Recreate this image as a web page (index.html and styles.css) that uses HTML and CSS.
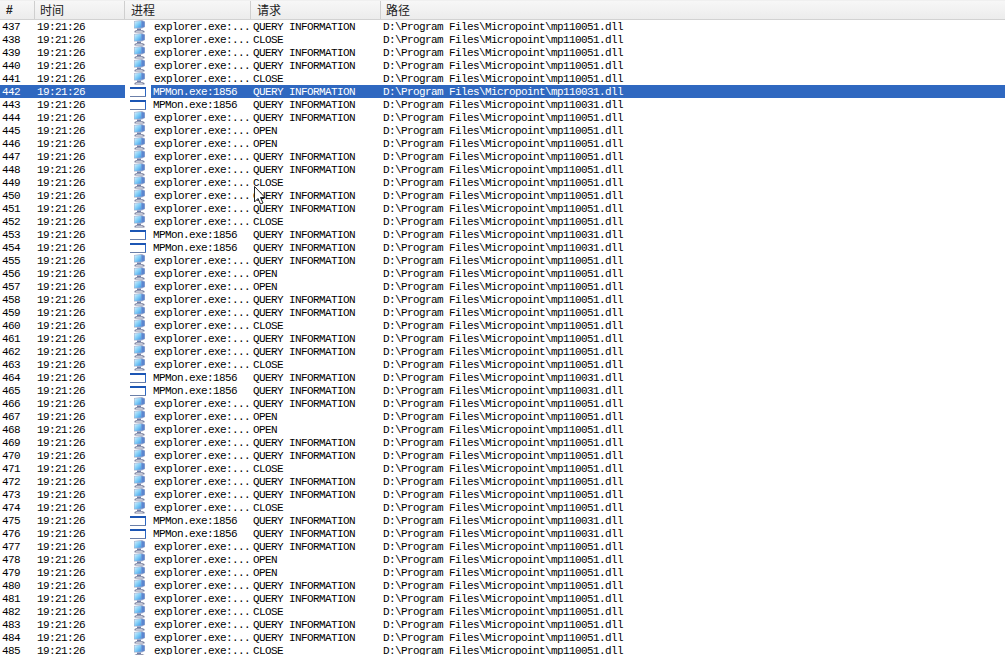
FILE: index.html
```html
<!DOCTYPE html>
<html lang="zh">
<head>
<meta charset="utf-8">
<title>Process log</title>
<link rel="stylesheet" href="styles.css">
</head>
<body>
<svg class="defs" width="0" height="0" aria-hidden="true">
  <defs>
    <linearGradient id="scr" x1="0" y1="0" x2="1" y2="1">
      <stop offset="0" stop-color="#d8f1fd"/>
      <stop offset=".5" stop-color="#7fcdf7"/>
      <stop offset="1" stop-color="#3a92e8"/>
    </linearGradient>
  </defs>
  <symbol id="pc" viewBox="0 0 26 13">
    <path d="M9 1 17 0 20 1.5V7L17 8.5 9 8.5Z" fill="#a5aecb"/>
    <path d="M9.5 1.6 16.5 1V7.6L9.5 8Z" fill="url(#scr)"/>
    <path d="M16.5 1 19.5 1.8V6.8L16.5 7.8Z" fill="#5a86d0"/>
    <path d="M12 8.5H16V10H12Z" fill="#6f7ea8"/>
    <path d="M9.5 11 11.5 10H17L19.5 11V12.5H9.5Z" fill="#7c829e"/>
    <path d="M11.5 10.8H17L18 11.8H10.5Z" fill="#dde0ea"/>
  </symbol>
  <symbol id="win" viewBox="0 0 26 13">
    <path d="M5 2H21V4H5Z" fill="#1c56b4"/>
    <path d="M20 4H21V11H20Z" fill="#2b67c4"/>
    <path d="M5 11H21V12H5Z" fill="#6b7fa8"/>
  </symbol>
</svg>
<div class="head">
  <div class="hc c-n hash">#</div>
  <div class="hc c-t">时间</div>
  <div class="hc c-p">进程</div>
  <div class="hc c-r">请求</div>
  <div class="hc c-f">路径</div>
</div>
<div class="rows">
<div class="row"><span class="c-n">437</span><span class="c-t">19:21:26</span><svg class="ico"><use href="#pc"/></svg><span class="pn">explorer.exe:...</span><span class="c-r">QUERY INFORMATION</span><span class="c-f">D:\Program Files\Micropoint\mp110051.dll</span></div>
<div class="row"><span class="c-n">438</span><span class="c-t">19:21:26</span><svg class="ico"><use href="#pc"/></svg><span class="pn">explorer.exe:...</span><span class="c-r">CLOSE</span><span class="c-f">D:\Program Files\Micropoint\mp110051.dll</span></div>
<div class="row"><span class="c-n">439</span><span class="c-t">19:21:26</span><svg class="ico"><use href="#pc"/></svg><span class="pn">explorer.exe:...</span><span class="c-r">QUERY INFORMATION</span><span class="c-f">D:\Program Files\Micropoint\mp110051.dll</span></div>
<div class="row"><span class="c-n">440</span><span class="c-t">19:21:26</span><svg class="ico"><use href="#pc"/></svg><span class="pn">explorer.exe:...</span><span class="c-r">QUERY INFORMATION</span><span class="c-f">D:\Program Files\Micropoint\mp110051.dll</span></div>
<div class="row"><span class="c-n">441</span><span class="c-t">19:21:26</span><svg class="ico"><use href="#pc"/></svg><span class="pn">explorer.exe:...</span><span class="c-r">CLOSE</span><span class="c-f">D:\Program Files\Micropoint\mp110051.dll</span></div>
<div class="row sel"><span class="c-n">442</span><span class="c-t">19:21:26</span><svg class="ico"><use href="#win"/></svg><span class="pn mp">MPMon.exe:1856</span><span class="c-r">QUERY INFORMATION</span><span class="c-f">D:\Program Files\Micropoint\mp110031.dll</span></div>
<div class="row"><span class="c-n">443</span><span class="c-t">19:21:26</span><svg class="ico"><use href="#win"/></svg><span class="pn mp">MPMon.exe:1856</span><span class="c-r">QUERY INFORMATION</span><span class="c-f">D:\Program Files\Micropoint\mp110031.dll</span></div>
<div class="row"><span class="c-n">444</span><span class="c-t">19:21:26</span><svg class="ico"><use href="#pc"/></svg><span class="pn">explorer.exe:...</span><span class="c-r">QUERY INFORMATION</span><span class="c-f">D:\Program Files\Micropoint\mp110051.dll</span></div>
<div class="row"><span class="c-n">445</span><span class="c-t">19:21:26</span><svg class="ico"><use href="#pc"/></svg><span class="pn">explorer.exe:...</span><span class="c-r">OPEN</span><span class="c-f">D:\Program Files\Micropoint\mp110051.dll</span></div>
<div class="row"><span class="c-n">446</span><span class="c-t">19:21:26</span><svg class="ico"><use href="#pc"/></svg><span class="pn">explorer.exe:...</span><span class="c-r">OPEN</span><span class="c-f">D:\Program Files\Micropoint\mp110051.dll</span></div>
<div class="row"><span class="c-n">447</span><span class="c-t">19:21:26</span><svg class="ico"><use href="#pc"/></svg><span class="pn">explorer.exe:...</span><span class="c-r">QUERY INFORMATION</span><span class="c-f">D:\Program Files\Micropoint\mp110051.dll</span></div>
<div class="row"><span class="c-n">448</span><span class="c-t">19:21:26</span><svg class="ico"><use href="#pc"/></svg><span class="pn">explorer.exe:...</span><span class="c-r">QUERY INFORMATION</span><span class="c-f">D:\Program Files\Micropoint\mp110051.dll</span></div>
<div class="row"><span class="c-n">449</span><span class="c-t">19:21:26</span><svg class="ico"><use href="#pc"/></svg><span class="pn">explorer.exe:...</span><span class="c-r">CLOSE</span><span class="c-f">D:\Program Files\Micropoint\mp110051.dll</span></div>
<div class="row"><span class="c-n">450</span><span class="c-t">19:21:26</span><svg class="ico"><use href="#pc"/></svg><span class="pn">explorer.exe:...</span><span class="c-r">QUERY INFORMATION</span><span class="c-f">D:\Program Files\Micropoint\mp110051.dll</span></div>
<div class="row"><span class="c-n">451</span><span class="c-t">19:21:26</span><svg class="ico"><use href="#pc"/></svg><span class="pn">explorer.exe:...</span><span class="c-r">QUERY INFORMATION</span><span class="c-f">D:\Program Files\Micropoint\mp110051.dll</span></div>
<div class="row"><span class="c-n">452</span><span class="c-t">19:21:26</span><svg class="ico"><use href="#pc"/></svg><span class="pn">explorer.exe:...</span><span class="c-r">CLOSE</span><span class="c-f">D:\Program Files\Micropoint\mp110051.dll</span></div>
<div class="row"><span class="c-n">453</span><span class="c-t">19:21:26</span><svg class="ico"><use href="#win"/></svg><span class="pn mp">MPMon.exe:1856</span><span class="c-r">QUERY INFORMATION</span><span class="c-f">D:\Program Files\Micropoint\mp110031.dll</span></div>
<div class="row"><span class="c-n">454</span><span class="c-t">19:21:26</span><svg class="ico"><use href="#win"/></svg><span class="pn mp">MPMon.exe:1856</span><span class="c-r">QUERY INFORMATION</span><span class="c-f">D:\Program Files\Micropoint\mp110031.dll</span></div>
<div class="row"><span class="c-n">455</span><span class="c-t">19:21:26</span><svg class="ico"><use href="#pc"/></svg><span class="pn">explorer.exe:...</span><span class="c-r">QUERY INFORMATION</span><span class="c-f">D:\Program Files\Micropoint\mp110051.dll</span></div>
<div class="row"><span class="c-n">456</span><span class="c-t">19:21:26</span><svg class="ico"><use href="#pc"/></svg><span class="pn">explorer.exe:...</span><span class="c-r">OPEN</span><span class="c-f">D:\Program Files\Micropoint\mp110051.dll</span></div>
<div class="row"><span class="c-n">457</span><span class="c-t">19:21:26</span><svg class="ico"><use href="#pc"/></svg><span class="pn">explorer.exe:...</span><span class="c-r">OPEN</span><span class="c-f">D:\Program Files\Micropoint\mp110051.dll</span></div>
<div class="row"><span class="c-n">458</span><span class="c-t">19:21:26</span><svg class="ico"><use href="#pc"/></svg><span class="pn">explorer.exe:...</span><span class="c-r">QUERY INFORMATION</span><span class="c-f">D:\Program Files\Micropoint\mp110051.dll</span></div>
<div class="row"><span class="c-n">459</span><span class="c-t">19:21:26</span><svg class="ico"><use href="#pc"/></svg><span class="pn">explorer.exe:...</span><span class="c-r">QUERY INFORMATION</span><span class="c-f">D:\Program Files\Micropoint\mp110051.dll</span></div>
<div class="row"><span class="c-n">460</span><span class="c-t">19:21:26</span><svg class="ico"><use href="#pc"/></svg><span class="pn">explorer.exe:...</span><span class="c-r">CLOSE</span><span class="c-f">D:\Program Files\Micropoint\mp110051.dll</span></div>
<div class="row"><span class="c-n">461</span><span class="c-t">19:21:26</span><svg class="ico"><use href="#pc"/></svg><span class="pn">explorer.exe:...</span><span class="c-r">QUERY INFORMATION</span><span class="c-f">D:\Program Files\Micropoint\mp110051.dll</span></div>
<div class="row"><span class="c-n">462</span><span class="c-t">19:21:26</span><svg class="ico"><use href="#pc"/></svg><span class="pn">explorer.exe:...</span><span class="c-r">QUERY INFORMATION</span><span class="c-f">D:\Program Files\Micropoint\mp110051.dll</span></div>
<div class="row"><span class="c-n">463</span><span class="c-t">19:21:26</span><svg class="ico"><use href="#pc"/></svg><span class="pn">explorer.exe:...</span><span class="c-r">CLOSE</span><span class="c-f">D:\Program Files\Micropoint\mp110051.dll</span></div>
<div class="row"><span class="c-n">464</span><span class="c-t">19:21:26</span><svg class="ico"><use href="#win"/></svg><span class="pn mp">MPMon.exe:1856</span><span class="c-r">QUERY INFORMATION</span><span class="c-f">D:\Program Files\Micropoint\mp110031.dll</span></div>
<div class="row"><span class="c-n">465</span><span class="c-t">19:21:26</span><svg class="ico"><use href="#win"/></svg><span class="pn mp">MPMon.exe:1856</span><span class="c-r">QUERY INFORMATION</span><span class="c-f">D:\Program Files\Micropoint\mp110031.dll</span></div>
<div class="row"><span class="c-n">466</span><span class="c-t">19:21:26</span><svg class="ico"><use href="#pc"/></svg><span class="pn">explorer.exe:...</span><span class="c-r">QUERY INFORMATION</span><span class="c-f">D:\Program Files\Micropoint\mp110051.dll</span></div>
<div class="row"><span class="c-n">467</span><span class="c-t">19:21:26</span><svg class="ico"><use href="#pc"/></svg><span class="pn">explorer.exe:...</span><span class="c-r">OPEN</span><span class="c-f">D:\Program Files\Micropoint\mp110051.dll</span></div>
<div class="row"><span class="c-n">468</span><span class="c-t">19:21:26</span><svg class="ico"><use href="#pc"/></svg><span class="pn">explorer.exe:...</span><span class="c-r">OPEN</span><span class="c-f">D:\Program Files\Micropoint\mp110051.dll</span></div>
<div class="row"><span class="c-n">469</span><span class="c-t">19:21:26</span><svg class="ico"><use href="#pc"/></svg><span class="pn">explorer.exe:...</span><span class="c-r">QUERY INFORMATION</span><span class="c-f">D:\Program Files\Micropoint\mp110051.dll</span></div>
<div class="row"><span class="c-n">470</span><span class="c-t">19:21:26</span><svg class="ico"><use href="#pc"/></svg><span class="pn">explorer.exe:...</span><span class="c-r">QUERY INFORMATION</span><span class="c-f">D:\Program Files\Micropoint\mp110051.dll</span></div>
<div class="row"><span class="c-n">471</span><span class="c-t">19:21:26</span><svg class="ico"><use href="#pc"/></svg><span class="pn">explorer.exe:...</span><span class="c-r">CLOSE</span><span class="c-f">D:\Program Files\Micropoint\mp110051.dll</span></div>
<div class="row"><span class="c-n">472</span><span class="c-t">19:21:26</span><svg class="ico"><use href="#pc"/></svg><span class="pn">explorer.exe:...</span><span class="c-r">QUERY INFORMATION</span><span class="c-f">D:\Program Files\Micropoint\mp110051.dll</span></div>
<div class="row"><span class="c-n">473</span><span class="c-t">19:21:26</span><svg class="ico"><use href="#pc"/></svg><span class="pn">explorer.exe:...</span><span class="c-r">QUERY INFORMATION</span><span class="c-f">D:\Program Files\Micropoint\mp110051.dll</span></div>
<div class="row"><span class="c-n">474</span><span class="c-t">19:21:26</span><svg class="ico"><use href="#pc"/></svg><span class="pn">explorer.exe:...</span><span class="c-r">CLOSE</span><span class="c-f">D:\Program Files\Micropoint\mp110051.dll</span></div>
<div class="row"><span class="c-n">475</span><span class="c-t">19:21:26</span><svg class="ico"><use href="#win"/></svg><span class="pn mp">MPMon.exe:1856</span><span class="c-r">QUERY INFORMATION</span><span class="c-f">D:\Program Files\Micropoint\mp110031.dll</span></div>
<div class="row"><span class="c-n">476</span><span class="c-t">19:21:26</span><svg class="ico"><use href="#win"/></svg><span class="pn mp">MPMon.exe:1856</span><span class="c-r">QUERY INFORMATION</span><span class="c-f">D:\Program Files\Micropoint\mp110031.dll</span></div>
<div class="row"><span class="c-n">477</span><span class="c-t">19:21:26</span><svg class="ico"><use href="#pc"/></svg><span class="pn">explorer.exe:...</span><span class="c-r">QUERY INFORMATION</span><span class="c-f">D:\Program Files\Micropoint\mp110051.dll</span></div>
<div class="row"><span class="c-n">478</span><span class="c-t">19:21:26</span><svg class="ico"><use href="#pc"/></svg><span class="pn">explorer.exe:...</span><span class="c-r">OPEN</span><span class="c-f">D:\Program Files\Micropoint\mp110051.dll</span></div>
<div class="row"><span class="c-n">479</span><span class="c-t">19:21:26</span><svg class="ico"><use href="#pc"/></svg><span class="pn">explorer.exe:...</span><span class="c-r">OPEN</span><span class="c-f">D:\Program Files\Micropoint\mp110051.dll</span></div>
<div class="row"><span class="c-n">480</span><span class="c-t">19:21:26</span><svg class="ico"><use href="#pc"/></svg><span class="pn">explorer.exe:...</span><span class="c-r">QUERY INFORMATION</span><span class="c-f">D:\Program Files\Micropoint\mp110051.dll</span></div>
<div class="row"><span class="c-n">481</span><span class="c-t">19:21:26</span><svg class="ico"><use href="#pc"/></svg><span class="pn">explorer.exe:...</span><span class="c-r">QUERY INFORMATION</span><span class="c-f">D:\Program Files\Micropoint\mp110051.dll</span></div>
<div class="row"><span class="c-n">482</span><span class="c-t">19:21:26</span><svg class="ico"><use href="#pc"/></svg><span class="pn">explorer.exe:...</span><span class="c-r">CLOSE</span><span class="c-f">D:\Program Files\Micropoint\mp110051.dll</span></div>
<div class="row"><span class="c-n">483</span><span class="c-t">19:21:26</span><svg class="ico"><use href="#pc"/></svg><span class="pn">explorer.exe:...</span><span class="c-r">QUERY INFORMATION</span><span class="c-f">D:\Program Files\Micropoint\mp110051.dll</span></div>
<div class="row"><span class="c-n">484</span><span class="c-t">19:21:26</span><svg class="ico"><use href="#pc"/></svg><span class="pn">explorer.exe:...</span><span class="c-r">QUERY INFORMATION</span><span class="c-f">D:\Program Files\Micropoint\mp110051.dll</span></div>
<div class="row"><span class="c-n">485</span><span class="c-t">19:21:26</span><svg class="ico"><use href="#pc"/></svg><span class="pn">explorer.exe:...</span><span class="c-r">CLOSE</span><span class="c-f">D:\Program Files\Micropoint\mp110051.dll</span></div>
</div>
<svg class="cursor" width="12" height="19" viewBox="0 0 12 19" aria-hidden="true"><path d="M.5.5V16L4 12.5 6.5 18 9 17 6.5 11.5H11Z" fill="#fff" stroke="#222"/></svg>
</body>
</html>
```
FILE: styles.css
```css
html, body {
  margin: 0;
  padding: 0;
  background: #fff;
  overflow: hidden;
  height: 655px;
}
body {
  position: relative;
  font-family: "Liberation Mono", monospace;
  font-size: 11px;
  color: #000;
}
.defs { position: absolute; }
.head {
  display: flex;
  height: 18px;
  background: linear-gradient(#f7f7f7, #ececec);
  border-top: 1px solid #f0f0f0;
  border-bottom: 1px solid #d2d2d2;
  font-family: "Noto Sans CJK SC", sans-serif;
  font-size: 12px;
  line-height: 18px;
  color: #222;
}
.hc {
  box-sizing: border-box;
  border-right: 1px solid #cfcfcf;
  flex: none;
}
.head .c-n { width: 35px; }
.head .c-t { width: 90px; padding-left: 5px; }
.head .c-p { width: 126px; padding-left: 6px; }
.head .c-r { width: 130px; padding-left: 6px; }
.head .c-f { flex: 1; border-right: 0; padding-left: 5px; }
.hash {
  font-family: "Liberation Sans", sans-serif;
  font-weight: bold;
  padding-left: 6px;
}
.row {
  display: flex;
  height: 13px;
  line-height: 15px;
  letter-spacing: -0.6px;
  white-space: pre;
  align-items: flex-start;
}
.row span { flex: none; height: 13px; }
.row .c-n { width: 37px; box-sizing: border-box; padding-left: 2px; }
.row .c-t { width: 88px; }
.ico {
  flex: none;
  display: block;
  width: 26px;
  height: 13px;
  background: #fff;
}
.row .pn {
  width: 102px;
  box-sizing: border-box;
  padding-left: 3px;
}
.row .mp { padding-left: 2px; }
.row .c-r { width: 130px; }
.row .c-f { flex: 1; }
.sel {
  background: #2f68c0;
  color: #fff;
}
.cursor {
  position: absolute;
  left: 254px;
  top: 186px;
}
```
